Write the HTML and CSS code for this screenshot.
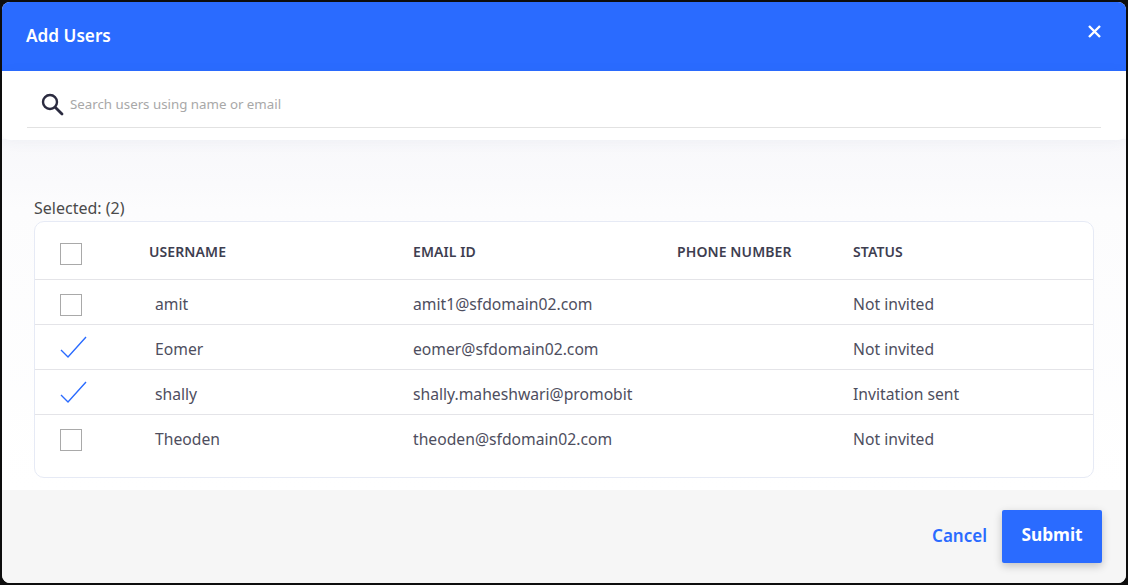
FILE: index.html
```html
<!DOCTYPE html>
<html lang="en">
<head>
<meta charset="utf-8">
<title>Add Users</title>
<link rel="stylesheet" href="styles.css">
</head>
<body>
<div class="modal">
  <header class="head">
    <h1 class="title">Add Users</h1>
    <button class="close" aria-label="Close">
      <svg width="13" height="13" viewBox="0 0 13 13"><path d="M1 1L12 12M12 1L1 12" stroke="#fff" stroke-width="2.4" fill="none"/></svg>
    </button>
  </header>
  <div class="search-wrap">
    <div class="search">
      <svg class="search-icon" width="24" height="24" viewBox="0 0 24 24"><circle cx="10" cy="10" r="7" stroke="#2b2b40" stroke-width="2.4" fill="none"/><path d="M15.2 15.2L22 22" stroke="#2b2b40" stroke-width="2.8" fill="none" stroke-linecap="round"/></svg>
      <span class="placeholder">Search users using name or email</span>
    </div>
  </div>
  <main class="body">
    <div class="selected">Selected: (2)</div>
    <div class="table">
      <div class="row row-head">
        <span class="cell-check"><span class="box"></span></span>
        <span>USERNAME</span><span>EMAIL ID</span><span>PHONE NUMBER</span><span>STATUS</span>
      </div>
      <div class="row">
        <span class="cell-check"><span class="box"></span></span>
        <span class="name">amit</span><span class="email">amit1@sfdomain02.com</span><span></span><span>Not invited</span>
      </div>
      <div class="row">
        <span class="cell-check"><svg class="tick" width="28" height="24" viewBox="0 0 28 24"><path d="M1 14L8 21L26 1" stroke="#2a6bff" stroke-width="1.4" fill="none"/></svg></span>
        <span class="name">Eomer</span><span class="email">eomer@sfdomain02.com</span><span></span><span>Not invited</span>
      </div>
      <div class="row">
        <span class="cell-check"><svg class="tick" width="28" height="24" viewBox="0 0 28 24"><path d="M1 14L8 21L26 1" stroke="#2a6bff" stroke-width="1.4" fill="none"/></svg></span>
        <span class="name">shally</span><span class="email">shally.maheshwari@promobit</span><span></span><span>Invitation sent</span>
      </div>
      <div class="row row-last">
        <span class="cell-check"><span class="box"></span></span>
        <span class="name">Theoden</span><span class="email">theoden@sfdomain02.com</span><span></span><span>Not invited</span>
      </div>
    </div>
  </main>
  <footer class="foot">
    <a class="cancel">Cancel</a>
    <button class="submit">Submit</button>
  </footer>
</div>
</body>
</html>
```
FILE: styles.css
```css
* { box-sizing: border-box; }
html, body { margin: 0; height: 100%; }
body {
  background: #0d0d0d;
  padding: 2px;
  font-family: "Noto Sans", "Open Sans", sans-serif;
  color: #4a4a5a;
  overflow: hidden;
}
.modal {
  width: 1124px;
  height: 581px;
  border-radius: 8px;
  overflow: hidden;
  background: #fff;
  display: flex;
  flex-direction: column;
}
.head {
  height: 69px;
  background: #2a6bff;
  display: flex;
  justify-content: space-between;
  padding: 0 25px 0 24px;
  align-items: flex-start;
}
.title {
  margin: 22px 0 0;
  font-size: 17.2px;
  line-height: 24px;
  font-weight: 600;
  color: #fff;
}
.close {
  margin-top: 23px;
  padding: 0;
  border: 0;
  background: none;
  display: flex;
}
.search-wrap {
  height: 69px;
  padding: 0 25px;
  background: #fff;
  border-radius: 0 0 8px 8px;
  box-shadow: 0 2px 14px rgba(60, 70, 110, 0.05);
  position: relative;
  z-index: 1;
}
.search {
  height: 57px;
  border-bottom: 1px solid #e2e2e2;
  display: flex;
  align-items: center;
  gap: 6px;
  padding: 10px 0 0 13px;
}
.placeholder {
  font-size: 13.3px;
  color: #a8a8a8;
}
.search-icon { flex: none; }
.body {
  flex: 1;
  padding: 58px 32px 0;
  background: linear-gradient(#f8f8fb 0, #fafafc 45px, #fcfcfd 70px, #fff 100%);
  margin-top: -1px;
}
.selected {
  font-size: 16px;
  line-height: 20px;
  color: #4a4a4a;
  margin-bottom: 4px;
  position: relative;
  top: 1px;
}
.table {
  height: 257px;
  background: #fff;
  border: 1px solid #e6eaf5;
  border-radius: 10px;
}
.row {
  display: grid;
  grid-template-columns: 114px 264px 264px 176px 1fr;
  height: 45px;
  align-items: center;
  border-bottom: 1px solid #e4e4e8;
  font-size: 15.7px;
  color: #4e4e5e;
  line-height: 20px;
}
.row > span:not(.cell-check) { padding-top: 4px; }
.row-head {
  height: 58px;
  font-size: 14px;
  font-weight: 600;
  color: #3e3e50;
  letter-spacing: 0.1px;
}
.row-head > span:not(.cell-check) { padding-top: 2px; }
.row-last { border-bottom-color: transparent; }
.cell-check { padding: 6px 0 0 25px; display: flex; align-items: center; }
.box {
  width: 22px;
  height: 22px;
  border: 1px solid #a9a9a9;
  background: #fff;
}
.tick { margin-top: -5px; }
.row > .name { padding-left: 6px; }
.email {
  display: block;
  width: 220px;
  overflow: hidden;
  white-space: nowrap;
}
.foot {
  height: 93px;
  background: #f6f6f6;
  display: flex;
  justify-content: flex-end;
  align-items: flex-start;
  padding: 20px 24px 0 0;
}
.cancel {
  margin: 14px 15px 0 0;
  font-size: 17px;
  font-weight: 600;
  line-height: 24px;
  color: #2a6bff;
}
.submit {
  width: 100px;
  height: 53px;
  padding: 0 0 4px;
  border: 0;
  border-radius: 2px;
  background: #2a6bff;
  color: #fff;
  font-family: inherit;
  font-size: 17.3px;
  font-weight: 700;
  box-shadow: 0 3px 8px rgba(0, 0, 0, 0.22);
}
```
